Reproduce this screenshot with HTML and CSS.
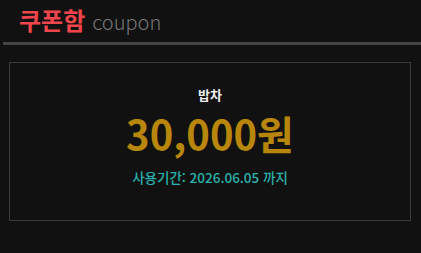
FILE: index.html
```html
<!DOCTYPE html>
<html lang="ko">
<head>
<meta charset="utf-8">
<link rel="stylesheet" href="styles.css">
</head>
<body>
<div class="page">
  <header class="head">
    <h1 class="title">쿠폰함</h1>
    <span class="sub">coupon</span>
  </header>
  <div class="bar"></div>
  <section class="coupon">
    <div class="name">밥차</div>
    <div class="amount">30,000원</div>
    <div class="period">사용기간: 2026.06.05 까지</div>
  </section>
</div>
</body>
</html>
```
FILE: styles.css
```css
html, body {
  margin: 0;
  padding: 0;
  background: #111111;
}
body {
  font-family: "Noto Sans CJK KR", "Noto Sans", sans-serif;
}
.page {
  padding: 0 0 0 3px;
}
.head {
  display: flex;
  align-items: baseline;
  gap: 7px;
  padding: 4px 0 0 16px;
  height: 38px;
  box-sizing: border-box;
}
.title {
  margin: 0;
  font-size: 24px;
  font-weight: 700;
  color: #f0454a;
  line-height: 32px;
}
.sub {
  font-size: 20px;
  font-weight: 300;
  color: #777777;
  line-height: 32px;
}
.bar {
  height: 3px;
  background: #444444;
  margin-top: 4px;
}
.coupon {
  margin: 17px 10px 0 6px;
  border: 1px solid #3a3a3a;
  height: 159px;
  box-sizing: border-box;
  display: flex;
  flex-direction: column;
  align-items: center;
  padding-top: 22px;
}
.name {
  color: #eeeeee;
  font-weight: 700;
  font-size: 13px;
  line-height: 20px;
}
.amount {
  color: #b8860b;
  font-weight: 700;
  font-size: 40px;
  line-height: 56px;
  margin-top: 0;
}
.period {
  color: #2ab3ad;
  font-weight: 500;
  font-size: 13.5px;
  line-height: 20px;
  margin-top: 6px;
}
```
